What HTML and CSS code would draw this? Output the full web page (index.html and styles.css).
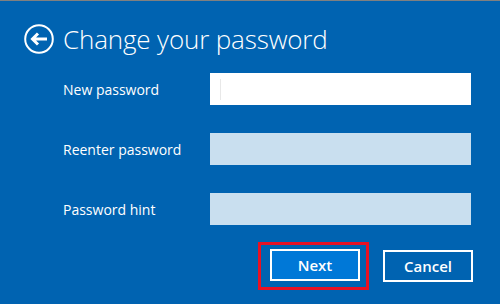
FILE: index.html
```html
<!DOCTYPE html>
<html lang="en">
<head>
  <meta charset="UTF-8" />
  <title>Change your password</title>
  <link rel="stylesheet" href="styles.css">
</head>
<body>
  <div class="dialog">
    <div class="title-row">
      <svg class="back" width="30" height="30" viewBox="0 0 30 30">
        <circle cx="15" cy="15" r="13.8" fill="none" stroke="#fff" stroke-width="2"/>
        <path d="M23 15H8.5M14 9.5L8.5 15L14 20.5" fill="none" stroke="#fff" stroke-width="3"/>
      </svg>
      <h1>Change your password</h1>
    </div>

    <div class="form">
      <label>New password</label>
      <div class="field active"><span class="caret"></span></div>

      <label>Reenter password</label>
      <div class="field"></div>

      <label>Password hint</label>
      <div class="field"></div>
    </div>

    <div class="actions">
      <span class="focus-box"><button class="btn primary">Next</button></span>
      <button class="btn">Cancel</button>
    </div>
  </div>
</body>
</html>
```

FILE: styles.css
```css
body {
  margin: 0;
  padding: 0;
  font-family: 'Open Sans', 'Noto Sans', sans-serif;
}

.dialog {
  box-sizing: border-box;
  width: 500px;
  height: 304px;
  background-color: #0063b1;
  border-top: 1px solid #808080;
  color: #ffffff;
}

.title-row {
  display: flex;
  align-items: center;
  padding: 23px 0 0 24px;
  height: 30px;
}

.back {
  display: block;
  flex-shrink: 0;
}

h1 {
  margin: 0 0 0 9px;
  font-size: 26px;
  font-weight: 300;
  line-height: 30px;
  letter-spacing: -0.15px;
}

.form {
  display: grid;
  grid-template-columns: 147px 261px;
  row-gap: 28px;
  align-items: center;
  margin-top: 19px;
  padding-left: 63px;
}

.form label {
  font-size: 14px;
}

.field {
  height: 32px;
  background-color: #c9dfef;
  display: flex;
  align-items: center;
}

.field.active {
  background-color: #ffffff;
}

.caret {
  width: 1px;
  height: 21px;
  margin-left: 10px;
  background-color: #e8e8e8;
}

.actions {
  display: flex;
  justify-content: flex-end;
  align-items: center;
  gap: 14px;
  margin-top: 17px;
  padding-right: 27px;
}

.focus-box {
  display: block;
  border: 3px solid #e81123;
  padding: 4px 6px 6px 9px;
}

.btn {
  display: block;
  box-sizing: border-box;
  width: 90px;
  height: 32px;
  border: 2px solid #ffffff;
  background: transparent;
  color: #ffffff;
  font-family: 'Open Sans', 'Noto Sans', sans-serif;
  font-size: 15px;
  font-weight: 600;
  padding: 0;
}

.btn.primary {
  background-color: #0078d7;
}
```
